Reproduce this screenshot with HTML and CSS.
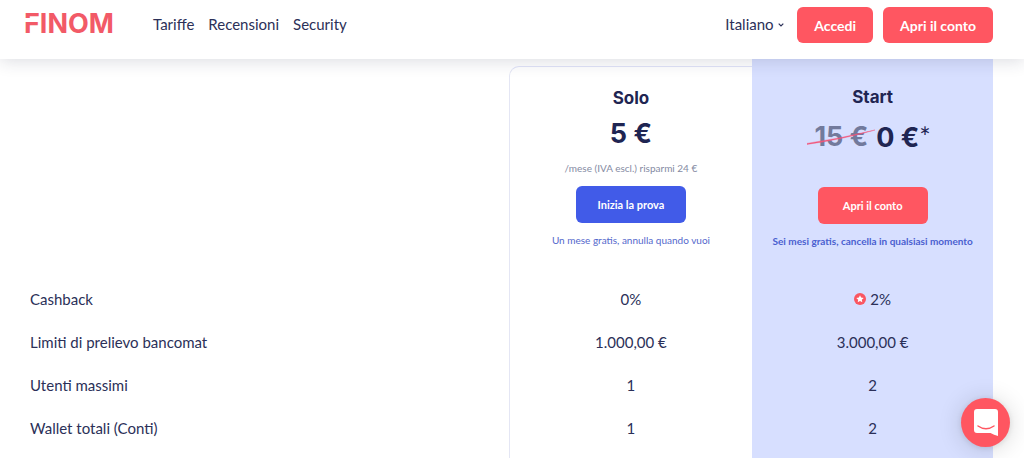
FILE: index.html
```html
<!DOCTYPE html>
<html lang="it">
<head>
    <meta charset="UTF-8">
    <meta name="viewport" content="width=device-width, initial-scale=1.0">
    <title>Finom - Tariffe</title>
    <link rel="stylesheet" href="styles.css">
</head>
<body>
    <header class="header">
        <a class="logo" href="#">FINOM</a>
        <nav class="nav">
            <a href="#tariffe">Tariffe</a>
            <a href="#recensioni">Recensioni</a>
            <a href="#security">Security</a>
        </nav>
        <div class="header-actions">
            <div class="language">
                <select aria-label="Lingua">
                    <option>Italiano</option>
                    <option>English</option>
                </select>
                <svg class="chevron" width="6" height="4" viewBox="0 0 6 4" aria-hidden="true">
                    <path d="M0.7 0.7 L3 3 L5.3 0.7" fill="none" stroke="currentColor" stroke-width="1.2"/>
                </svg>
            </div>
            <button class="btn btn-header">Accedi</button>
            <button class="btn btn-header">Apri il conto</button>
        </div>
    </header>

    <main class="pricing" id="tariffe">
        <table class="plans">
            <colgroup>
                <col>
                <col class="col-solo">
                <col class="col-start">
            </colgroup>
            <thead>
                <tr class="top-row">
                    <td></td>
                    <td></td>
                    <td class="featured"></td>
                </tr>
                <tr>
                    <td></td>
                    <th class="plan solo solo-top" scope="col">
                        <div class="plan-name">Solo</div>
                        <div class="price">5 €</div>
                        <div class="note">/mese (IVA escl.) risparmi 24 €</div>
                        <button class="btn btn-plan btn-blue">Inizia la prova</button>
                        <div class="trial">Un mese gratis, annulla quando vuoi</div>
                    </th>
                    <th class="plan featured" scope="col">
                        <div class="plan-name">Start</div>
                        <div class="price price-promo">
                            <span class="old-price">15 €
                                <svg class="strike" viewBox="0 0 66 16" preserveAspectRatio="none" aria-hidden="true">
                                    <path d="M0 14.4 Q33 9.4 66 1 Q34 10.6 0 15.4 Z" fill="#f2557a" stroke="#f2557a" stroke-width="0.4"/>
                                </svg>
                            </span>
                            <span>0 €<span class="asterisk">*</span></span>
                        </div>
                        <button class="btn btn-plan">Apri il conto</button>
                        <div class="trial trial-bold">Sei mesi gratis, cancella in qualsiasi momento</div>
                    </th>
                </tr>
            </thead>
            <tbody>
                <tr>
                    <th scope="row">Cashback</th>
                    <td class="solo">0%</td>
                    <td class="featured">
                        <span class="bonus">
                            <svg width="12" height="12" viewBox="0 0 12 12" aria-hidden="true">
                                <circle cx="6" cy="6" r="6" fill="#fa5661"/>
                                <path d="M6 2.2 L7.1 4.6 L9.7 4.9 L7.8 6.7 L8.3 9.3 L6 8 L3.7 9.3 L4.2 6.7 L2.3 4.9 L4.9 4.6 Z" fill="#fff"/>
                            </svg>
                            2%
                        </span>
                    </td>
                </tr>
                <tr>
                    <th scope="row">Limiti di prelievo bancomat</th>
                    <td class="solo">1.000,00 €</td>
                    <td class="featured">3.000,00 €</td>
                </tr>
                <tr>
                    <th scope="row">Utenti massimi</th>
                    <td class="solo">1</td>
                    <td class="featured">2</td>
                </tr>
                <tr>
                    <th scope="row">Wallet totali (Conti)</th>
                    <td class="solo">1</td>
                    <td class="featured">2</td>
                </tr>
            </tbody>
            <tfoot>
                <tr>
                    <td></td>
                    <td class="solo"></td>
                    <td class="featured"></td>
                </tr>
            </tfoot>
        </table>
    </main>

    <button class="chat" aria-label="Chat">
        <svg width="24" height="27" viewBox="0 0 24 27" aria-hidden="true">
            <path d="M3 0 H21 Q24 0 24 3 V27 Q20 26 16.5 24 H3 Q0 24 0 21 V3 Q0 0 3 0 Z" fill="#fff"/>
            <path d="M4 17 Q12 22.6 20 17" fill="none" stroke="#ff5661" stroke-width="1.5" stroke-linecap="round"/>
        </svg>
    </button>
</body>
</html>
```
FILE: styles.css
```css
/* Base */
body {
    margin: 0;
    font-family: Lato, Carlito, sans-serif;
    font-size: 15px;
    color: #2b3058;
    background: #fff;
}

a {
    color: inherit;
    text-decoration: none;
}

/* Header */
.header {
    position: relative;
    z-index: 2;
    display: flex;
    align-items: flex-start;
    box-sizing: border-box;
    height: 59px;
    padding: 7px 31px 0 24px;
    background: #fff;
    box-shadow: 0 2px 16px rgba(30, 35, 70, 0.16);
}

.logo {
    position: relative;
    width: 129px;
    font-family: Inter, sans-serif;
    font-size: 27px;
    font-weight: 700;
    line-height: 34px;
    color: #f25a67;
}

/* Gap in the stem of the F */
.logo::before {
    content: "";
    position: absolute;
    top: 11px;
    left: 0;
    width: 7px;
    height: 4px;
    background: #fff;
}

.nav {
    display: flex;
    gap: 14px;
    line-height: 34px;
}

.header-actions {
    display: flex;
    gap: 10px;
    margin-left: auto;
}

.language {
    position: relative;
}

.language select {
    appearance: none;
    height: 34px;
    padding: 0 13px 0 0;
    border: none;
    background: none;
    font: inherit;
    color: inherit;
    cursor: pointer;
}

.chevron {
    position: absolute;
    top: 16px;
    right: 3px;
    pointer-events: none;
}

/* Buttons */
.btn {
    border: none;
    border-radius: 6px;
    background: #ff5661;
    font-family: inherit;
    font-weight: 700;
    color: #fff;
    cursor: pointer;
}

.btn-header {
    height: 36px;
    padding: 0 17px;
    font-size: 14px;
}

.btn-plan {
    width: 110px;
    height: 37px;
    padding: 0;
    font-size: 11px;
}

.btn-blue {
    background: #415be8;
}

/* Plans table */
.pricing {
    padding: 0 31px 0 30px;
}

.plans {
    width: 100%;
    table-layout: fixed;
    border-spacing: 0;
}

.plans td,
.plans th {
    padding: 0;
    font-weight: 400;
    text-align: center;
}

.col-solo {
    width: 25.3%;
}

.col-start {
    width: 25%;
}

.top-row td {
    height: 7px;
}

.plans .plan {
    height: 210px;
    vertical-align: top;
}

.plans .solo {
    border-left: 1px solid #e4e6f4;
}

.plans .solo-top {
    border-top: 1px solid #e0e3f8;
    border-top-left-radius: 10px;
}

.featured {
    background: #d7dfff;
}

.plans .plan-name,
.plans .price {
    font-family: Inter, sans-serif;
    font-weight: 700;
    color: #1f2552;
}

.plan-name {
    padding-top: 18px;
    font-size: 17px;
    line-height: 26px;
}

.price {
    font-size: 27px;
    line-height: 46px;
}

.price-promo {
    display: flex;
    justify-content: center;
    gap: 8px;
    padding: 4px 0 26px;
}

.old-price {
    position: relative;
    color: #727a9c;
}

.strike {
    position: absolute;
    top: 15px;
    left: -7px;
    width: 68px;
    height: 16px;
}

.asterisk {
    font-family: Lato, sans-serif;
    font-weight: 400;
}

.note {
    margin-bottom: 7px;
    font-size: 10px;
    line-height: 22px;
    color: #858ba3;
}

.trial {
    margin-top: 8px;
    font-size: 10px;
    line-height: 18px;
    color: #5468cc;
}

.trial-bold {
    font-weight: 700;
    color: #4a60d0;
}

.plans tbody td,
.plans tbody th {
    height: 43px;
}

.plans tbody th {
    text-align: left;
}

.plans tfoot td {
    height: 9px;
}

.bonus {
    display: inline-flex;
    align-items: center;
    gap: 4px;
}

/* Chat launcher */
.chat {
    position: fixed;
    right: 14px;
    bottom: 11px;
    z-index: 3;
    display: flex;
    justify-content: center;
    align-items: center;
    width: 49px;
    height: 49px;
    padding: 0;
    border: none;
    border-radius: 50%;
    background: #ff5661;
    box-shadow: 0 1px 6px rgba(0, 0, 0, 0.1), 0 2px 24px rgba(0, 0, 0, 0.16);
    cursor: pointer;
}
```
